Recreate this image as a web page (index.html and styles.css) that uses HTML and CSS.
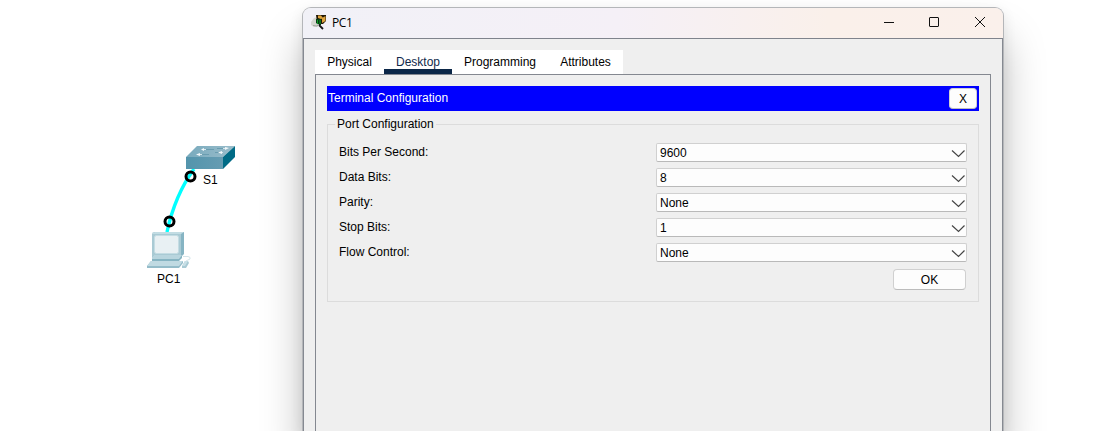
FILE: index.html
```html
<!DOCTYPE html>
<html lang="en">
<head>
<meta charset="utf-8">
<title>PC1</title>
<link rel="stylesheet" href="styles.css">
</head>
<body>
<svg class="topology" width="300" height="431" viewBox="0 0 300 431">
  <defs>
    <linearGradient id="front" x1="0" x2="1"><stop offset="0" stop-color="#5394ac"/><stop offset="1" stop-color="#659cb2"/></linearGradient>
    <linearGradient id="top" x1="0" x2="1"><stop offset="0" stop-color="#78aabd"/><stop offset="1" stop-color="#9abdcb"/></linearGradient>
  </defs>
  <path d="M194 169Q175 195 167 232" fill="none" stroke="#00ffff" stroke-width="3.400"/>
  <g>
    <path d="M186 157L197 146H235L223 157Z" fill="url(#top)"/>
    <path d="M186 157H223V169H186Z" fill="url(#front)"/>
    <path d="M223 157L235 146V157L223 169Z" fill="#006b86"/>
    <g fill="none" stroke="#6a9db0"><path d="M206 149.500H214M221 152.500H215M201 154.500H209M217 148.500H224"/></g>
    <g fill="none" stroke="#d8e8ed"><path d="M203 149.500H206M223 148.500H226M199 154.500H202M220 152.500H223"/></g>
    <g fill="#f2f8fa"><path d="M201 149.500L204 148V151ZM229 148L225 147V150ZM196 154.500L200 153V156ZM218 152.500L222 151V154Z"/></g>
  </g>
  <g>
    <path d="M152 233L155 232H184V254L181 257H152Z" fill="#86b4c3"/>
    <path d="M152 233H181V257H152Z" fill="#a9cad4"/>
    <path d="M152 233L155 232H184L181 234H152Z" fill="#c2dce3"/>
    <rect x="154.500" y="235.500" width="24" height="18" rx="2" fill="#e8f0f3" stroke="#c4dce3"/>
    <path d="M154 255H182V258L179 261H152V257Z" fill="#86b4c2"/>
    <path d="M154 255H182L179 259H152V257Z" fill="#b8d5de"/>
    <path d="M151 261H183V263L179 268H147V266Z" fill="#94bcc9"/>
    <path d="M151 261H183L179 266H147Z" fill="#c0dae2"/>
    <path d="M183 256.500H188Q191 257 190 259L186 261" fill="none" stroke="#d5e5ea"/>
    <path d="M182 266L185 261H188L189 263L186 268H182Z" fill="#a9cad4"/>
    <path d="M185 261H188L185 266H182Z" fill="#c8dfe6"/>
  </g>
  <circle cx="190.500" cy="176.500" r="4.500" fill="none" stroke="#000" stroke-width="3"/>
  <circle cx="169.500" cy="221.500" r="4.500" fill="none" stroke="#000" stroke-width="3"/>
  <text class="node-label" x="203" y="184">S1</text>
  <text class="node-label" x="157" y="283">PC1</text>
</svg>
<main class="window">
  <header class="titlebar">
    <svg class="app-icon" width="17" height="17" viewBox="0 0 17 17">
      <path d="M0 8L3 4L7 3V13L3 13L0 11Z" fill="#d4d6d0"/>
      <path d="M5 1H15V7L12 10H9L6 8Z" fill="#211806"/>
      <path d="M7 1.500H10L12 4L10 5L7 4ZM11 4L14.500 2V7L11 9Z" fill="#dda33c"/>
      <path d="M5 5H10V11H8L5 9Z" fill="#063c12"/>
      <path d="M6.500 6V10M9 6V10" stroke="#119b29"/>
      <path d="M2 11.500L6 12L8 10" fill="none" stroke="#a0a69f"/>
      <path d="M8 11L12 15" stroke="#151515" stroke-width="1.800"/>
    </svg>
    <span class="title">PC1</span>
    <svg class="controls" width="104" height="12" viewBox="0 0 104 12" fill="none" stroke="#111">
      <path d="M1 6.500H11"/>
      <rect x="46.500" y="1.500" width="9" height="9" rx=".5"/>
      <path d="M92 1L102 11M102 1L92 11"/>
    </svg>
  </header>
  <div class="client">
    <nav class="tabs">
      <span class="tab physical">Physical</span><span class="tab desktop active">Desktop</span><span class="tab programming">Programming</span><span class="tab attributes">Attributes</span>
    </nav>
    <section class="panel">
      <div class="bar"><span class="bar-title">Terminal Configuration</span><button class="close">X</button></div>
      <div class="group">
        <div class="legend"><span class="legend-text">Port Configuration</span></div>
        <div class="rows">
          <div class="row"><span class="label">Bits Per Second:</span><div class="select"><span class="value">9600</span><svg class="chevron" width="14" height="9" viewBox="0 0 14 9"><path d="M1 1.500L7.500 7.500L13.500 1.500"/></svg></div></div>
          <div class="row"><span class="label">Data Bits:</span><div class="select"><span class="value">8</span><svg class="chevron" width="14" height="9" viewBox="0 0 14 9"><path d="M1 1.500L7.500 7.500L13.500 1.500"/></svg></div></div>
          <div class="row"><span class="label">Parity:</span><div class="select"><span class="value">None</span><svg class="chevron" width="14" height="9" viewBox="0 0 14 9"><path d="M1 1.500L7.500 7.500L13.500 1.500"/></svg></div></div>
          <div class="row"><span class="label">Stop Bits:</span><div class="select"><span class="value">1</span><svg class="chevron" width="14" height="9" viewBox="0 0 14 9"><path d="M1 1.500L7.500 7.500L13.500 1.500"/></svg></div></div>
          <div class="row"><span class="label">Flow Control:</span><div class="select"><span class="value">None</span><svg class="chevron" width="14" height="9" viewBox="0 0 14 9"><path d="M1 1.500L7.500 7.500L13.500 1.500"/></svg></div></div>
        </div>
        <button class="ok">OK</button>
      </div>
    </section>
  </div>
</main>
</body>
</html>
```
FILE: styles.css
```css
* { box-sizing: border-box; }
body {
  margin: 0;
  width: 1117px;
  height: 431px;
  overflow: hidden;
  background: #fff;
  color: #000;
  font: 12px/14px "Liberation Sans", Arial, sans-serif;
  display: flex;
}
.topology { flex: none; width: 300px; height: 431px; }
.node-label { font-size: 12px; }
.window {
  flex: none;
  width: 702px;
  height: 424px;
  margin: 7px 0 0 2px;
  display: flex;
  flex-direction: column;
  border: 1px solid #b4b6b9;
  border-bottom: 0;
  border-radius: 9px 9px 0 0;
  background: #efefef;
  box-shadow: 0 32px 42px rgba(0, 0, 0, .25), 0 4px 14px rgba(0, 0, 0, .09);
}
.titlebar {
  flex: none;
  height: 31px;
  padding: 0 16px 0 8px;
  display: flex;
  align-items: center;
  border-bottom: 1px solid #7f838c;
  border-radius: 8px 8px 0 0;
  background: linear-gradient(90deg, #f1f1f7, #f5f0f7 45%, #faf0ea 75%, #faf0eb);
}
.app-icon { margin-top: -2px; }
.title { margin-left: 4px; margin-top: -1px; font: 12px/16px "Open Sans", "Noto Sans", sans-serif; letter-spacing: -.4px; }
.controls { margin-left: auto; margin-top: -2px; }
.client {
  flex: 1;
  min-height: 0;
  padding: 11px 11px 0;
  display: flex;
  flex-direction: column;
  border: solid #858991;
  border-width: 0 1px;
}
.tabs {
  flex: none;
  width: 308px;
  height: 24px;
  display: flex;
  background: #fff;
}
.tab { padding-top: 5px; text-align: center; }
.physical { width: 69px; }
.desktop { width: 68px; }
.programming { width: 96px; }
.attributes { width: 75px; }
.active { color: #10294b; border-bottom: 5px solid #0b2748; }
.panel {
  flex: 1;
  width: 676px;
  padding: 11px 11px 0;
  border: 1px solid #848890;
  border-bottom: 0;
}
.bar {
  width: 652px;
  height: 25px;
  padding: 2px 2px 2px 1px;
  display: flex;
  justify-content: space-between;
  background: #0000ff;
  color: #fff;
}
.bar-title { padding-top: 3px; }
button {
  padding: 0;
  border: 1px solid #d0d0d0;
  border-bottom-color: #bcbcbc;
  border-radius: 4px;
  background: #fdfdfd;
  color: #000;
  font: inherit;
}
.close { width: 28px; height: 21px; }
.group {
  width: 652px;
  height: 178px;
  margin-top: 13px;
  border: 1px solid #dcdcdc;
  display: flex;
  flex-direction: column;
}
.legend { height: 14px; margin-top: -8px; padding-left: 7px; }
.legend-text { display: inline-block; padding: 0 2px; background: #efefef; }
.rows { padding: 12px 11px 0; }
.row { height: 25px; display: flex; justify-content: space-between; }
.label { padding-top: 2px; }
.select {
  width: 311px;
  height: 19px;
  padding: 0 1px 0 3px;
  display: flex;
  justify-content: space-between;
  align-items: center;
  background: #fdfdfd;
  border: 1px solid #d0d0d0;
  border-bottom-color: #b9b9b9;
  border-radius: 2px;
}
.chevron { margin-top: 2px; fill: none; stroke: #454545; stroke-width: 1.2; }
.ok { width: 73px; height: 21px; margin: 1px 12px 0 auto; }
```
